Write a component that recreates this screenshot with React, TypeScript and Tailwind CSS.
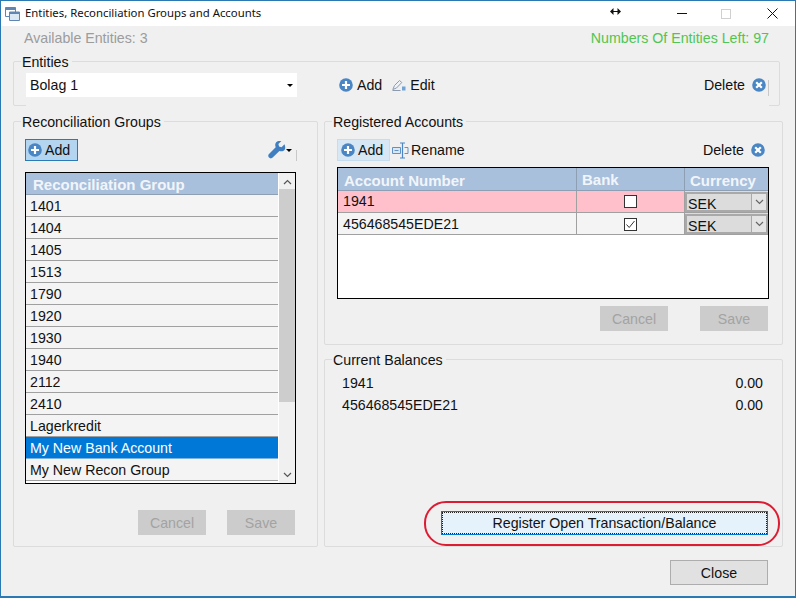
import type { ReactNode } from 'react';

const groups = ['1401', '1404', '1405', '1513', '1790', '1920', '1930', '1940', '2112', '2410', 'Lagerkredit', 'My New Bank Account', 'My New Recon Group'];

function PlusIcon() {
  return (
    <svg width="14" height="14" viewBox="0 0 14 14" className="shrink-0">
      <circle cx="7" cy="7" r="6.8" fill="#4a86c4" />
      <path d="M7 3v8M3 7h8" stroke="#fff" strokeWidth="2.2" />
    </svg>
  );
}

function CrossIcon() {
  return (
    <svg width="14" height="14" viewBox="0 0 14 14" className="shrink-0">
      <circle cx="7" cy="7" r="6.8" fill="#4a86c4" />
      <path d="M4.2 4.2l5.6 5.6M9.8 4.2l-5.6 5.6" stroke="#fff" strokeWidth="2.2" />
    </svg>
  );
}

function EditIcon() {
  return (
    <svg width="14" height="13" viewBox="0 0 14 13" className="shrink-0">
      <path d="M.8 10.5L2.5 6.5 7.5 1.5 9.8 3.5 4.5 9Z" fill="#eef1f5" stroke="#8d9bb0" strokeWidth="1" />
      <path d="M.5 11.5h8" stroke="#8d9bb0" strokeWidth="1" />
      <path d="M10 7.5h3.5v4H10z" fill="#6ea4d6" />
    </svg>
  );
}

function RenameIcon() {
  return (
    <svg width="17" height="17" viewBox="0 0 17 17" className="shrink-0">
      <path d="M.5 5.5h8v6h-8z" fill="#dbe7f3" stroke="#5f93c8" />
      <path d="M2.5 8.5h4" stroke="#5f93c8" />
      <path d="M10.5 1v15M8 1h5M8 16h5" stroke="#4a86c4" strokeWidth="1.2" fill="none" />
      <path d="M12.5 5.5h3.5v6h-3.5" fill="none" stroke="#5f93c8" />
    </svg>
  );
}

function WrenchIcon() {
  return (
    <svg width="18" height="18" viewBox="0 0 18 18" className="shrink-0">
      <path d="M16.5 3.2l-3 3-2.4-.7-.7-2.4 3-3C11 -.5 8.6 .2 7.7 2 7 3.4 7.1 5 7.7 6.2L1 12.9c-1.2 1.2-.8 2.8 0 3.7.9.9 2.5 1.2 3.7 0l6.7-6.7c1.3.6 2.9.6 4.2-.2 1.7-1 2.2-3.3.9-6.5z" fill="#3f7fc1" />
    </svg>
  );
}

function Chevron({ className }: { className: string }) {
  return (
    <svg width="9" height="6" viewBox="0 0 9 6" className={className}>
      <path d="M1 1l3.5 3.5L8 1" fill="none" stroke="currentColor" strokeWidth="1.2" />
    </svg>
  );
}

function Group({ title, className, children }: { title: string; className: string; children: ReactNode }) {
  return (
    <section className={'relative rounded-[2px] border border-[#dcdcdc] ' + className}>
      <span className="absolute left-[7px] top-[-8px] bg-[#f0f0f0] pl-[1px] pr-[3px] leading-[16px]">{title}</span>
      {children}
    </section>
  );
}

function FlatButton({ label }: { label: string }) {
  return (
    <button className="h-[25px] w-[68px] bg-[#cccccc] pt-[2px] text-[#a3a3a3]">{label}</button>
  );
}

function DeleteAction() {
  return (
    <div className="flex items-center gap-[7px]">
      <span className="mt-[2px]">Delete</span>
      <CrossIcon />
    </div>
  );
}

function CurrencyCell() {
  return (
    <div className="flex w-[83px] border-b border-[#a0a0a0] bg-[#dcdcdc] pt-[1px]">
      <div className="flex-1 border-2 border-r-0 border-[#a9a9a9] pl-[1px] pt-[2px] leading-[17px]">SEK</div>
      <div className="flex w-[17px] items-center justify-center border-2 border-l border-[#a9a9a9] bg-[#e4e4e4] text-[#666]">
        <Chevron className="" />
      </div>
    </div>
  );
}

function AccountRow({ name, checked, pink }: { name: string; checked: boolean; pink: boolean }) {
  return (
    <div className={'flex h-[22px] ' + (pink ? 'bg-[#ffc0cb]' : 'bg-[#f4f4f4]')}>
      <div className={'flex w-[239px] items-center border-b border-r border-[#a0a0a0] pl-[5px] ' + (pink ? '' : 'pt-[2px]')}>{name}</div>
      <div className={'flex w-[108px] items-center justify-center border-b border-r border-[#a0a0a0] ' + (pink ? '' : 'pt-[2px]')}>
        <span className="flex h-[13px] w-[13px] items-center justify-center border border-[#333] bg-white">
          {checked && (
            <svg width="11" height="11" viewBox="0 0 11 11">
              <path d="M1.5 5.5L4.2 8.5 9.5 2" fill="none" stroke="#333" strokeWidth="1" />
            </svg>
          )}
        </span>
      </div>
      <CurrencyCell />
    </div>
  );
}

export default function App() {
  return (
    <div className="relative flex h-[598px] w-[796px] flex-col border border-b-2 border-[#2b79b3] bg-[#f0f0f0] font-['Liberation_Sans',Arial,sans-serif] text-[14.2px] text-[#111]">
      <header className="flex h-[25px] shrink-0 items-center bg-white pl-[4px] pr-[17px]">
        <svg width="15" height="14" viewBox="0 0 15 14" className="shrink-0">
          <path d="M.5 .5h10v9H.5z" fill="#fff" stroke="#5f86b3" />
          <path d="M.5 .5h10v2.5H.5z" fill="#5f86b3" />
          <path d="M4.5 5h10v8.5h-10z" fill="#dbe7f3" stroke="#5f86b3" />
          <path d="M4.5 5h10v2h-10z" fill="#5f86b3" />
        </svg>
        <h1 className="mb-[2px] ml-[5px] font-['Noto_Sans',sans-serif] text-[11.35px] text-[#111]">Entities, Reconciliation Groups and Accounts</h1>
        <svg width="11" height="7" viewBox="0 0 11 7" className="mb-[4px] ml-auto shrink-0">
          <path d="M0 3.5L3.5 0v7zM11 3.5L7.5 0v7z" fill="#111" />
          <path d="M3 3.5h5" stroke="#111" />
        </svg>
        <div className="ml-[56px] h-[1px] w-[10px] shrink-0 bg-[#111]" />
        <div className="ml-[34px] h-[10px] w-[10px] shrink-0 border border-[#d0d0d0]" />
        <svg width="11" height="11" viewBox="0 0 11 11" className="ml-[36px] shrink-0">
          <path d="M.5 .5l10 10M10.5 .5l-10 10" stroke="#111" strokeWidth="1" />
        </svg>
      </header>

      <div className="flex h-[22px] shrink-0 items-center justify-between pl-[23px] pr-[26px] pt-[4px]">
        <span className="text-[#9c9c9c]">Available Entities: 3</span>
        <span className="text-[#4fc651]">Numbers Of Entities Left: 97</span>
      </div>

      <Group title="Entities" className="ml-[12px] mt-[13px] h-[45px] w-[767px] shrink-0">
        <div className="ml-[12px] mt-[11px] flex h-[33px] w-[743px] items-start bg-[#f0f0f0]">
          <div className="flex h-[24px] w-[271px] items-center justify-between bg-white px-[4px]">
            <span className="mt-[2px]">Bolag 1</span>
            <span className="h-0 w-0 border-x-[3px] border-t-[3px] border-x-transparent border-t-black" />
          </div>
          <div className="ml-[42px] flex h-[24px] items-center gap-[4px]"><PlusIcon /><span className="mt-[2px]">Add</span></div>
          <div className="ml-[10px] flex h-[24px] items-center gap-[4px]"><EditIcon /><span className="mt-[2px]">Edit</span></div>
          <div className="ml-auto flex h-[24px] items-center"><DeleteAction /></div>
          <div className="ml-[2px] mt-[7px] h-[16px] w-[1px] bg-[#c8c8c8]" />
        </div>
      </Group>

      <div className="ml-[12px] mt-[15px] flex shrink-0 gap-[6px]">
        <Group title="Reconciliation Groups" className="h-[426px] w-[305px] shrink-0 pl-[11px] pt-[17px]">
          <div className="flex h-[22px] items-center justify-between pr-[20px]">
            <button className="flex h-[22px] w-[53px] items-center gap-[3px] border border-[#2a7ab8] bg-[#b4d5f0] pl-[2px]">
              <PlusIcon /><span className="mt-[2px]">Add</span>
            </button>
            <div className="flex h-[22px] items-center">
              <WrenchIcon />
              <span className="mt-[1px] h-0 w-0 border-x-[3px] border-t-[3px] border-x-transparent border-t-black" />
              <span className="ml-[4px] h-[11px] w-[1px] self-end bg-[#c8c8c8]" />
            </div>
          </div>
          <div className="mt-[11px] flex h-[312px] w-[271px] border border-black bg-white">
            <div className="w-[252px] overflow-hidden">
              <div className="flex h-[22px] items-center border-b border-[#8f9fb3] bg-[#a9c0dc] pl-[7px] pt-[3px] text-[15px] font-bold text-[#f1f5fa]">Reconciliation Group</div>
              {groups.map((name) => (
                <div
                  key={name}
                  className={
                    'flex h-[22px] items-center border-b pl-[4px] pt-[2px] ' +
                    (name === 'My New Bank Account' ? 'border-[#7db3e0] bg-[#0078d7] text-white' : 'border-[#a0a0a0] bg-[#f4f4f4]')
                  }
                >
                  {name}
                </div>
              ))}
            </div>
            <div className="flex w-[17px] flex-col items-center border-l border-white bg-[#f0f0f0]">
              <Chevron className="mt-[6px] rotate-180 text-[#555]" />
              <div className="mt-[4px] h-[213px] w-full bg-[#cdcdcd]" />
              <Chevron className="mb-[5px] mt-auto text-[#555]" />
            </div>
          </div>
          <div className="ml-[113px] mt-[26px] flex gap-[21px]">
            <FlatButton label="Cancel" />
            <FlatButton label="Save" />
          </div>
        </Group>

        <div className="flex w-[459px] shrink-0 flex-col gap-[14px]">
          <Group title="Registered Accounts" className="h-[224px] pl-[12px] pt-[17px]">
            <div className="flex h-[22px] items-center pr-[17px]">
              <button className="flex h-[22px] w-[53px] items-center gap-[3px] border border-[#c6ddf0] bg-[#d8e7f4] pl-[3px]">
                <PlusIcon /><span className="mt-[2px]">Add</span>
              </button>
              <div className="ml-[2px] flex items-center gap-[2px]"><RenameIcon /><span className="mt-[2px]">Rename</span></div>
              <div className="ml-auto"><DeleteAction /></div>
            </div>
            <div className="mt-[6px] h-[132px] w-[432px] border border-black bg-white">
              <div className="flex h-[23px] border-b border-[#8f9fb3] bg-[#a9c0dc] text-[15px] font-bold text-[#f1f5fa]">
                <div className="flex w-[239px] items-center border-r border-[#8f9fb3] pl-[6px] pt-[4px]">Account Number</div>
                <div className="w-[108px] border-r border-[#8f9fb3] pl-[5px] pt-[4px] leading-[15px]">Bank</div>
                <div className="flex flex-1 items-center pl-[5px] pt-[4px]">Currency</div>
              </div>
              <AccountRow name="1941" checked={false} pink={true} />
              <AccountRow name="456468545EDE21" checked={true} pink={false} />
            </div>
            <div className="ml-[263px] mt-[7px] flex gap-[32px]">
              <FlatButton label="Cancel" />
              <FlatButton label="Save" />
            </div>
          </Group>

          <Group title="Current Balances" className="h-[188px] pl-[17px] pr-[19px] pt-[13px]">
            <div className="flex h-[22px] items-center justify-between"><span>1941</span><span>0.00</span></div>
            <div className="flex h-[22px] items-center justify-between"><span>456468545EDE21</span><span>0.00</span></div>
            <div className="ml-[99px] mt-[94px] flex h-[24px] w-[327px] items-center justify-center border border-[#0078d7] bg-[#e5f1fb] pt-[2px] outline-1 -outline-offset-2 outline-dotted outline-[#222]">
              Register Open Transaction/Balance
            </div>
          </Group>
        </div>
      </div>

      <div className="mt-[13px] flex justify-end pr-[27px]">
        <button className="h-[25px] w-[98px] border border-[#adadad] bg-[#e1e1e1] pt-[2px]">Close</button>
      </div>

      <div className="pointer-events-none absolute left-[423px] top-[500px] h-[45px] w-[356px] rounded-[22px] border-2 border-[#dc1c32]" />
    </div>
  );
}
